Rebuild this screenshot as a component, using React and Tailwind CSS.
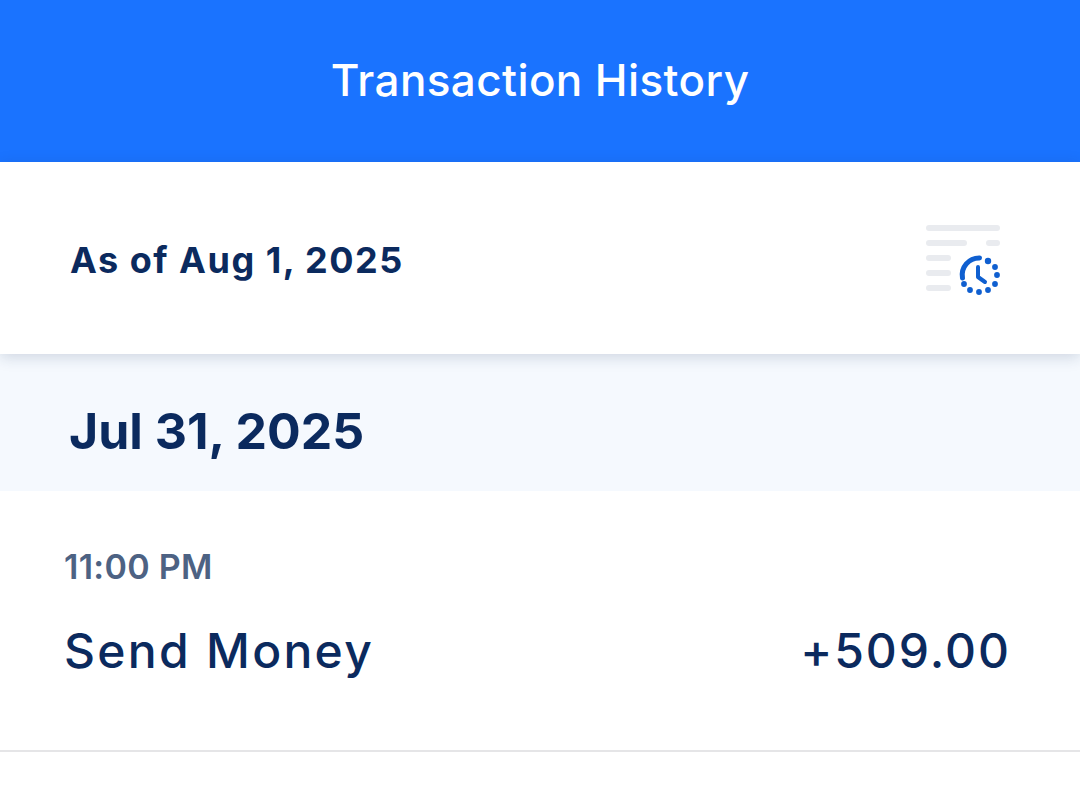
function HistoryIcon() {
  return (
    <svg className="mt-1" width="76" height="72" viewBox="0 0 76 72" fill="none" strokeLinecap="round">
      <g stroke="#e9ebef" strokeWidth="6">
        <path d="M5 4h68" />
        <path d="M5 19h35" />
        <path d="M65 19h8" />
        <path d="M5 34h19" />
        <path d="M5 49h19" />
        <path d="M5 64h19" />
      </g>
      <g stroke="#0f5fd0" strokeLinejoin="round">
        <path d="M38.500 54a17 17 0 0 1 17 -20" strokeWidth="5" />
        <path d="M54 43v10l7 5" strokeWidth="4" />
      </g>
      <g fill="#0f5fd0">
        <circle cx="64" cy="37" r="3.2" />
        <circle cx="71" cy="43" r="2.9" />
        <circle cx="73" cy="51" r="2.9" />
        <circle cx="71" cy="60" r="2.9" />
        <circle cx="64" cy="66" r="2.9" />
        <circle cx="55" cy="68" r="2.9" />
        <circle cx="46" cy="66" r="2.9" />
        <circle cx="40" cy="60" r="2.9" />
      </g>
    </svg>
  );
}

export default function App() {
  return (
    <div className="min-h-[786px] bg-white font-['Inter','Liberation_Sans',sans-serif] text-[#0b2a5e]">
      {/* HEADER */}
      <header className="flex h-[162px] items-center justify-center bg-[#1a73ff] pb-[2px] text-[44px] font-medium tracking-[0.4px] text-white">
        Transaction History
      </header>

      {/* AS OF */}
      <div className="relative z-10 flex h-[192px] items-center justify-between bg-white pl-[70px] pr-[80px] shadow-[0_3px_14px_rgba(30,50,90,0.18)]">
        <div className="mt-[4px] text-[36px] font-bold tracking-[1.5px]">As of Aug 1, 2025</div>
        <HistoryIcon />
      </div>

      {/* DATE BAND */}
      <div className="flex h-[137px] items-center bg-[#f5f9fe] pl-[69px] pt-[18px] text-[50px] font-bold">
        Jul 31, 2025
      </div>

      {/* TRANSACTION */}
      <div className="flex h-[261px] flex-col border-b-2 border-[#e5e5e7] pl-[64px] pr-[69px] pt-[56px]">
        <div className="text-[34px] font-semibold leading-[40px] tracking-[0.3px] text-[#4d6283]">
          11:00 PM
        </div>
        <div className="mt-[33px] flex items-center justify-between text-[48px] font-medium leading-[62px]">
          <span className="tracking-[2.3px]">Send Money</span>
          <span className="tracking-[2px]">+509.00</span>
        </div>
      </div>
    </div>
  );
}
